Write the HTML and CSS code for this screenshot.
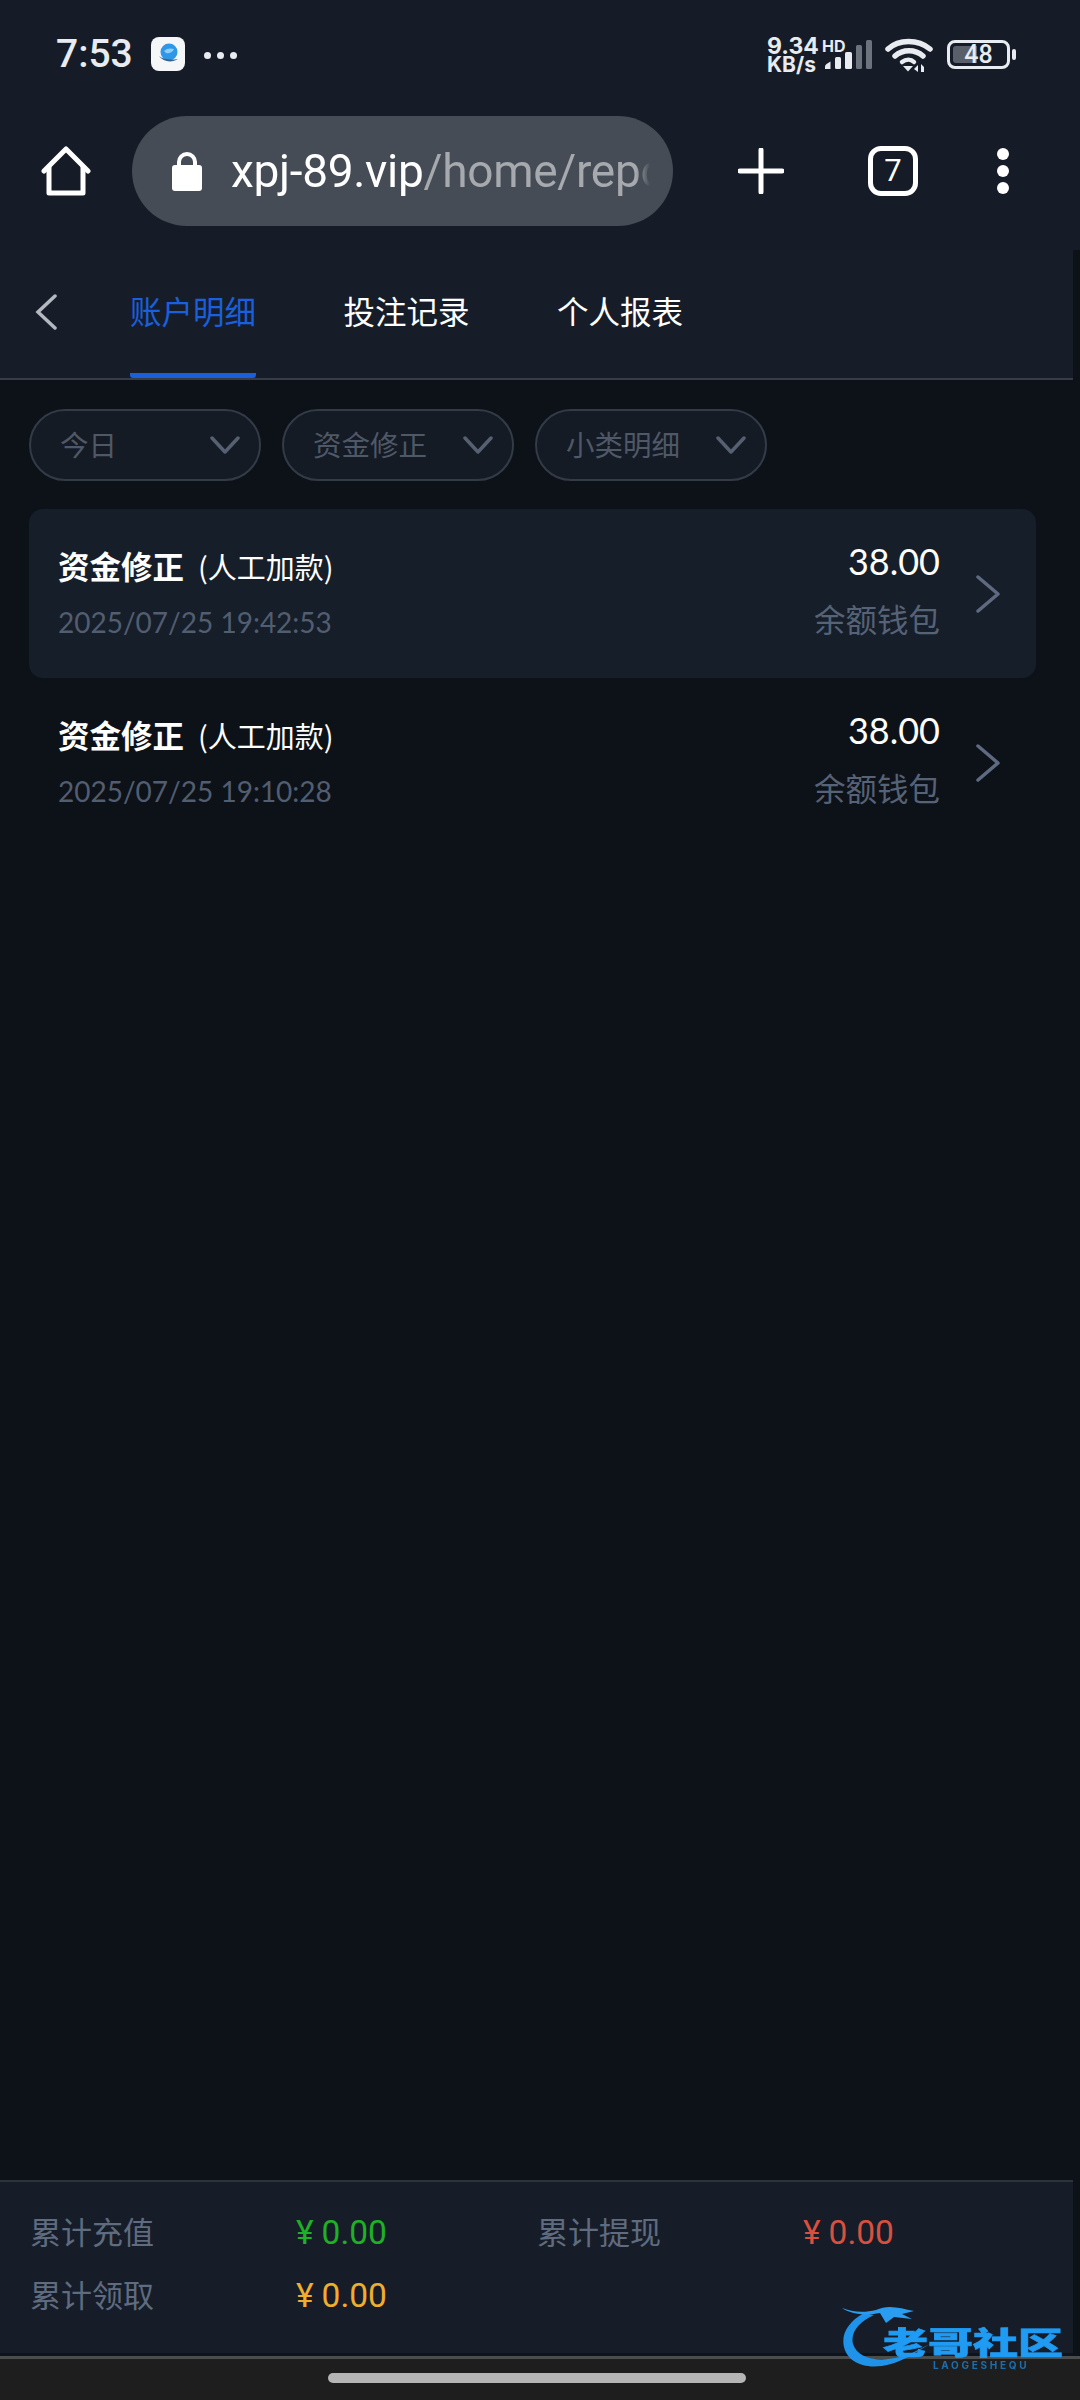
FILE: index.html
```html
<!DOCTYPE html>
<html lang="zh-CN">
<head>
  <meta charset="UTF-8" />
  <title>账户明细</title>
  <link rel="stylesheet" href="styles.css">
</head>
<body>
  <div class="phone">

    <!-- Android status bar + browser toolbar -->
    <div class="topbar">
      <div class="status">
        <span class="clock">7:53</span>
        <svg class="app-icon" width="34" height="34" viewBox="0 0 34 34">
          <rect width="34" height="34" rx="8" fill="#f4f6f8"/>
          <circle cx="18" cy="15" r="8.500" fill="#2f97e8"/>
          <path d="M13 14c3-3 7-3 10-2-1 3-5 5-8 4z" fill="#8fcdf7"/>
          <path d="M8 19c4 6 13 7 19 3-6 1-14 1-19-3z" fill="#35648c"/>
        </svg>
        <span class="status-dots"><i></i><i></i><i></i></span>
        <div class="status-right">
          <div class="speed"><b>9.34</b><b>KB/s</b></div>
          <div class="signal">
            <span class="hd">HD</span>
            <svg width="48" height="30" viewBox="0 0 48 30">
              <path d="M1 29v-2.500q0-1.500 1.500-2.500l4-2.500V29z" fill="#e8ebef"/>
              <rect x="11" y="17" width="6" height="12" rx="1.500" fill="#e8ebef"/>
              <rect x="21" y="12" width="7" height="17" rx="1.500" fill="#e8ebef"/>
              <rect x="32" y="5" width="6" height="24" rx="1.500" fill="#6d737c"/>
              <rect x="42" y="0" width="6" height="29" rx="1.500" fill="#6d737c"/>
            </svg>
          </div>
          <svg class="wifi" width="48" height="34" viewBox="0 0 48 34" fill="none" stroke="#e8ebef" stroke-width="5.500" stroke-linecap="round">
            <path d="M3 11C14 1 33 1 45 11"/>
            <path d="M10 18c8-7 20-7 28 0"/>
            <path d="M17 24c4-3 9-3 12 0" stroke-width="4.500"/>
            <path d="M18 28h10l-5 5.500z" fill="#e8ebef" stroke="none"/>
            <path d="M33 34v-7l-4 4zM36 26v8h3v-5z" fill="#e8ebef" stroke="none"/>
          </svg>
          <div class="battery">
            <div class="battery-body"><span class="battery-fill"></span><span class="battery-num">48</span></div>
            <span class="battery-tip"></span>
          </div>
        </div>
      </div>

      <div class="browser">
        <svg class="home" width="50" height="50" viewBox="0 0 50 50" fill="none" stroke="#fff" stroke-width="5" stroke-linejoin="round" stroke-linecap="round">
          <path d="M3 25 25 3l22 22"/>
          <path d="M8 21v26h34V21"/>
        </svg>
        <div class="addr">
          <svg class="lock" width="30" height="40" viewBox="0 0 30 40">
            <path d="M7 17v-6a8 8 0 0 1 16 0v6" fill="none" stroke="#fff" stroke-width="4"/>
            <rect y="14" width="30" height="26" rx="3" fill="#fff"/>
          </svg>
          <div class="url"><span class="host">xpj-89.vip</span><span class="path">/home/report/acc</span></div>
        </div>
        <svg class="plus" width="46" height="46" viewBox="0 0 46 46" stroke="#fff" stroke-width="5" stroke-linecap="round">
          <path d="M23 2v42M2 23h42"/>
        </svg>
        <div class="tabcount">7</div>
        <div class="menu"><i></i><i></i><i></i></div>
      </div>
    </div>

    <!-- page header -->
    <div class="tabs">
      <svg class="back" width="22" height="36" viewBox="0 0 22 36" fill="none" stroke="#b4b8bf" stroke-width="3.500" stroke-linecap="round">
        <path d="M20 2 3 18l17 16"/>
      </svg>
      <div class="tab active">账户明细</div>
      <div class="tab">投注记录</div>
      <div class="tab">个人报表</div>
    </div>

    <div class="content">
      <div class="filters">
        <div class="chip"><span>今日</span><svg class="chip-arrow" width="30" height="18" viewBox="0 0 30 18"><path d="M2 2l13 14L28 2"/></svg></div>
        <div class="chip"><span>资金修正</span><svg class="chip-arrow" width="30" height="18" viewBox="0 0 30 18"><path d="M2 2l13 14L28 2"/></svg></div>
        <div class="chip"><span>小类明细</span><svg class="chip-arrow" width="30" height="18" viewBox="0 0 30 18"><path d="M2 2l13 14L28 2"/></svg></div>
      </div>

      <div class="list">
        <div class="row odd">
          <div class="row-left">
            <div class="row-title"><b>资金修正</b><span>(人工加款)</span></div>
            <div class="row-date">2025/07/25 19:42:53</div>
          </div>
          <div class="row-right">
            <div class="row-amount">38.00</div>
            <div class="row-wallet">余额钱包</div>
          </div>
          <svg class="row-arrow" width="24" height="38" viewBox="0 0 24 38"><path d="M2 2l20 17L2 36"/></svg>
        </div>
        <div class="row">
          <div class="row-left">
            <div class="row-title"><b>资金修正</b><span>(人工加款)</span></div>
            <div class="row-date">2025/07/25 19:10:28</div>
          </div>
          <div class="row-right">
            <div class="row-amount">38.00</div>
            <div class="row-wallet">余额钱包</div>
          </div>
          <svg class="row-arrow" width="24" height="38" viewBox="0 0 24 38"><path d="M2 2l20 17L2 36"/></svg>
        </div>
      </div>
    </div>

    <!-- totals -->
    <div class="totals">
      <div class="total"><span class="total-label">累计充值</span><span class="total-val green">¥<em>0.00</em></span></div>
      <div class="total"><span class="total-label">累计提现</span><span class="total-val red">¥<em>0.00</em></span></div>
      <div class="total"><span class="total-label">累计领取</span><span class="total-val yellow">¥<em>0.00</em></span></div>
    </div>

    <div class="navbar"><span class="handle"></span></div>

    <!-- forum watermark sits over the footer -->
    <div class="watermark">
      <svg width="100" height="74" viewBox="0 0 100 74">
        <path d="M24 11C8 20 1 32 4 45c4 18 30 28 64 10l22-13-20 10C42 62 18 58 13 42 10 30 20 19 34 13z" fill="#1f93ea"/>
        <path d="M2 6c10 4 22 5 34 2 12-6 24-2 38 1l-12 3 10 5-18-2-8 6-6-10C26 14 10 12 2 6z" fill="#2a9df0"/>
      </svg>
      <span class="wm-name">老哥社区</span>
      <span class="wm-sub">LAOGESHEQU</span>
    </div>
  </div>
</body>
</html>
```

FILE: styles.css
```css
html, body {
  margin: 0;
  padding: 0;
  background: #0d1219;
  font-family: "Noto Sans CJK SC", sans-serif;
}

.phone {
  position: relative;
  width: 1080px;
  height: 2400px;
  overflow: hidden;
  display: flex;
  flex-direction: column;
}

/* status bar + browser toolbar */
.topbar {
  height: 250px;
  background: #151c27;
  flex-shrink: 0;
}

.status {
  height: 116px;
  box-sizing: border-box;
  padding: 34px 64px 0 56px;
  display: flex;
  align-items: flex-start;
  color: #e8ebef;
}
.clock {
  font: 500 39px/40px Roboto, sans-serif;
  width: 95px;
}
.app-icon { margin-top: 3px; }
.status-dots {
  display: flex;
  gap: 6px;
  margin: 18px 0 0 19px;
}
.status-dots i {
  width: 7px;
  height: 7px;
  border-radius: 50%;
  background: #e8ebef;
}
.status-right {
  margin-left: auto;
  display: flex;
  align-items: flex-start;
}
.speed {
  display: flex;
  flex-direction: column;
  font-family: Inter, sans-serif;
  width: 55px;
  margin-top: 2px;
}
.speed b {
  font-size: 21px;
  line-height: 18px;
  font-weight: 700;
  white-space: nowrap;
}
.speed b:first-child { font-size: 23px; line-height: 20px; }
.signal { position: relative; margin: 6px 0 0 2px; width: 48px; height: 30px; }
.hd {
  position: absolute;
  left: -2px;
  top: -1px;
  font: 700 16px/14px Inter, sans-serif;
}
.wifi { margin: 4px 0 0 13px; }
.battery {
  margin: 6px 0 0 14px;
  display: flex;
  align-items: center;
}
.battery-body {
  position: relative;
  width: 63px;
  height: 29px;
  box-sizing: border-box;
  border: 3px solid #e8ebef;
  border-radius: 8px;
  text-align: center;
  font: 500 25px/23px Roboto, sans-serif;
}
.battery-fill {
  position: absolute;
  left: 3px;
  top: 3px;
  bottom: 3px;
  width: 24px;
  background: #5a606a;
  border-radius: 3px 0 0 3px;
}
.battery-num { position: relative; }
.battery-tip {
  width: 4px;
  height: 11px;
  margin-left: 2px;
  border-radius: 2px;
  background: #e8ebef;
}

.browser {
  height: 110px;
  display: flex;
  align-items: center;
  padding-left: 41px;
}
.addr {
  margin-left: 41px;
  width: 541px;
  height: 110px;
  box-sizing: border-box;
  padding: 0 23px 0 40px;
  border-radius: 55px;
  background: #464c55;
  display: flex;
  align-items: center;
}
.url {
  margin-left: 29px;
  flex: 1;
  overflow: hidden;
  white-space: nowrap;
  font: 400 46px/110px Roboto, sans-serif;
  letter-spacing: -0.3px;
  -webkit-mask-image: linear-gradient(to right, #000 calc(100% - 14px), transparent);
  mask-image: linear-gradient(to right, #000 calc(100% - 14px), transparent);
}
.host { color: #fff; }
.path { color: #a6a9ae; }
.plus { margin-left: 65px; }
.tabcount {
  margin-left: 84px;
  width: 50px;
  height: 50px;
  box-sizing: border-box;
  border: 5px solid #fff;
  border-radius: 13px;
  color: #fff;
  text-align: center;
  font: 400 31px/40px Roboto, sans-serif;
}
.menu {
  margin-left: 79px;
  display: flex;
  flex-direction: column;
  gap: 5px;
}
.menu i {
  width: 12px;
  height: 12px;
  border-radius: 50%;
  background: #fff;
}

/* page tabs */
.tabs {
  flex-shrink: 0;
  width: 1073px;
  height: 130px;
  box-sizing: border-box;
  border-bottom: 2px solid #373d47;
  background: #161d29;
  display: flex;
  align-items: stretch;
  padding-left: 35px;
  position: relative;
}
.back { align-self: center; margin-top: -4px; }
.tab {
  margin-left: 87.500px;
  font-size: 31.500px;
  line-height: 120px;
  height: 128px;
  box-sizing: border-box;
  color: #fff;
  white-space: nowrap;
}
.tab.active {
  margin-left: 73px;
  color: #1a5fdb;
  border-bottom: 5px solid #1a5fdb;
  border-radius: 0 0 3px 3px;
}

/* main */
.content {
  flex: 1;
  width: 1073px;
  box-sizing: border-box;
  padding: 29px 37px 0 29px;
}
.filters {
  display: flex;
  gap: 21px;
}
.chip {
  width: 232px;
  height: 72px;
  box-sizing: border-box;
  border: 2px solid #333b47;
  border-radius: 36px;
  background: #141b25;
  padding: 0 19px 3px 29px;
  display: flex;
  align-items: center;
  justify-content: space-between;
  color: #4f5867;
  font-size: 28.500px;
}
.chip-arrow { margin-top: 3px; }
.chip-arrow path {
  fill: none;
  stroke: #566071;
  stroke-width: 3.500;
  stroke-linecap: round;
  stroke-linejoin: round;
}
.list { margin-top: 28px; }
.row {
  height: 169px;
  box-sizing: border-box;
  padding: 0 36px 0 29px;
  display: flex;
  align-items: center;
  border-radius: 14px;
}
.row.odd { background: #161e29; }
.row-left { flex: 1; margin-top: -2px; }
.row-title {
  color: #fff;
  line-height: 40px;
  white-space: nowrap;
}
.row-title b { font-size: 31.500px; font-weight: 700; }
.row-title span { font-size: 29px; margin-left: 14px; }
.row-date {
  margin-top: 12px;
  color: #525d70;
  font: 400 28px/36px Lato, sans-serif;
}
.row-right { text-align: right; margin-bottom: 9px; }
.row-amount {
  color: #fff;
  font: 400 36px/44px Lato, sans-serif;
}
.row-wallet {
  margin-top: 14px;
  color: #566276;
  font-size: 31.500px;
  line-height: 42px;
}
.row-arrow { margin-left: 36px; }
.row-arrow path {
  fill: none;
  stroke: #5e6a80;
  stroke-width: 3.500;
  stroke-linecap: round;
  stroke-linejoin: round;
}

/* totals */
.totals {
  flex-shrink: 0;
  width: 1073px;
  height: 176px;
  box-sizing: border-box;
  border-top: 2px solid #2b3340;
  border-bottom: 3px solid #0f141c;
  background: #161d29;
  padding: 27px 0 0 30px;
  display: grid;
  grid-template-columns: 507px 1fr;
  grid-auto-rows: 63px;
}
.total { display: flex; align-items: flex-start; }
.total-label {
  width: 266px;
  color: #5f6b7e;
  font-size: 31px;
  line-height: 44px;
}
.total-val {
  font: 400 33.500px/44px Roboto, sans-serif;
  margin-top: 2px;
}
.total-val em { font-style: normal; margin-left: 8px; }
.green { color: #1eb025; }
.red { color: #d9503f; }
.yellow { color: #f0ad2e; }

.navbar {
  flex-shrink: 0;
  height: 44px;
  box-sizing: border-box;
  border-top: 3px solid #4a4d4c;
  background: #1e1e1e;
  display: flex;
  justify-content: center;
  padding: 14px 7px 0 0;
}
.handle {
  width: 418px;
  height: 10px;
  border-radius: 5px;
  background: #b5b5b5;
}

/* watermark */
.watermark {
  position: absolute;
  left: 840px;
  top: 2302px;
  width: 230px;
  height: 74px;
  color: #1f9bf3;
  filter: blur(0.6px);
}
.wm-name {
  position: absolute;
  left: 43px;
  top: 14px;
  font-size: 45px;
  line-height: 50px;
  font-weight: 900;
  white-space: nowrap;
  transform: scaleY(0.68);
  -webkit-text-stroke: 1px #1f9bf3;
}
.wm-sub {
  position: absolute;
  left: 93px;
  top: 58px;
  font: 700 10px/10px Inter, sans-serif;
  letter-spacing: 2.700px;
  color: #1c6fae;
}
```
